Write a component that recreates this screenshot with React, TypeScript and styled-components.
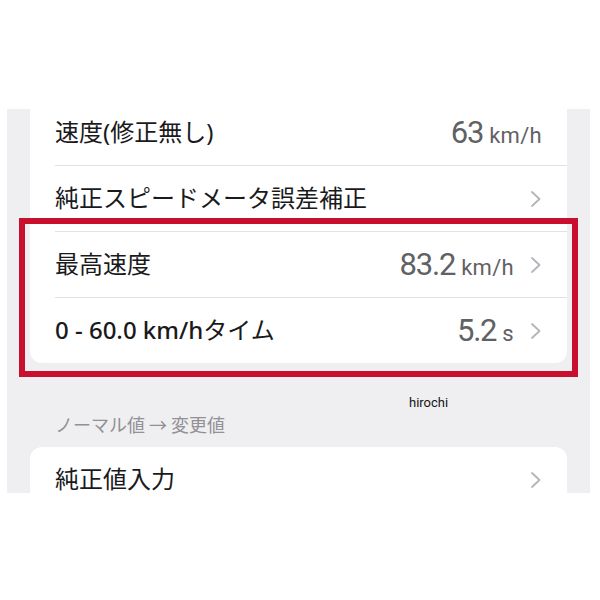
import React from 'react';
import styled, { createGlobalStyle } from 'styled-components';

const GlobalStyle = createGlobalStyle`
  body {
    margin: 0;
    background: #fff;
    font-family: "Noto Sans", "Noto Sans CJK JP", sans-serif;
  }
`;

const Frame = styled.div`
  position: relative;
  margin: 109px 0 0 7px;
  width: 583px;
  height: 384px;
  overflow: hidden;
  background: #efeff2;
  padding: 0 23px;
  box-sizing: border-box;
`;

const Card = styled.div<{ $clipTop?: boolean }>`
  background: #fff;
  border-radius: 12px;
  margin-top: ${(p) => (p.$clipTop ? '-9px' : '0')};
`;

const Row = styled.div`
  display: flex;
  align-items: center;
  justify-content: space-between;
  height: 65px;
  margin-left: 25px;
  padding-right: 25px;
  & + & {
    border-top: 1px solid #e2e2e5;
  }
`;

const Label = styled.span`
  font-family: "Noto Sans", "Noto Sans CJK JP", sans-serif;
  font-size: 24px;
  line-height: 1.2;
  font-weight: 400;
  color: #1a1a1c;
`;

const LatinPart = styled.span`
  font-weight: 500;
`;

const Right = styled.div`
  display: flex;
  align-items: center;
  gap: 16px;
`;

const Value = styled.span`
  font-family: Roboto, "Liberation Sans", sans-serif;
  color: #616164;
  display: flex;
  align-items: baseline;
  gap: 6px;
`;

const Num = styled.span`
  font-size: 31px;
  letter-spacing: -1.2px;
`;

const Unit = styled.span`
  font-size: 22px;
  letter-spacing: 0.3px;
`;

const SectionHeader = styled.div`
  padding: 50px 25px 12px;
  font-family: "Noto Sans CJK JP", sans-serif;
  font-size: 18px;
  line-height: 22px;
  color: #919195;
`;

const Highlight = styled.div`
  position: absolute;
  left: 12px;
  top: 109px;
  width: 559px;
  height: 159px;
  border: 6px solid #c8102e;
  box-sizing: border-box;
  pointer-events: none;
`;

const Watermark = styled.div`
  position: absolute;
  left: 402px;
  top: 286px;
  font-family: Roboto, "Liberation Sans", sans-serif;
  font-size: 13px;
  color: #151515;
`;

const Chevron = () => (
  <svg width="12" height="18" viewBox="0 0 12 18">
    <polyline points="2,2 9.5,9 2,16" fill="none" stroke="#b4b4ba" strokeWidth="1.8" strokeLinecap="round" strokeLinejoin="round" />
  </svg>
);

type RowData = { key: string; label: React.ReactNode; num?: string; unit?: string; chevron: boolean };

const rows: RowData[] = [
  { key: 'speed', label: '速度(修正無し)', num: '63', unit: 'km/h', chevron: false },
  { key: 'meter', label: '純正スピードメータ誤差補正', chevron: true },
  { key: 'max', label: '最高速度', num: '83.2', unit: 'km/h', chevron: true },
  {
    key: 'accel',
    label: (
      <>
        <LatinPart>0 - 60.0 km/h</LatinPart>タイム
      </>
    ),
    num: '5.2',
    unit: 's',
    chevron: true,
  },
];

export default function App() {
  return (
    <>
      <GlobalStyle />
      <Frame>
        <Card $clipTop>
          {rows.map((r) => (
            <Row key={r.key}>
              <Label>{r.label}</Label>
              <Right>
                {r.num && (
                  <Value>
                    <Num>{r.num}</Num>
                    <Unit>{r.unit}</Unit>
                  </Value>
                )}
                {r.chevron && <Chevron />}
              </Right>
            </Row>
          ))}
        </Card>
        <SectionHeader>ノーマル値 → 変更値</SectionHeader>
        <Card>
          <Row>
            <Label>純正値入力</Label>
            <Right>
              <Chevron />
            </Right>
          </Row>
        </Card>
        <Highlight />
        <Watermark>hirochi</Watermark>
      </Frame>
    </>
  );
}
